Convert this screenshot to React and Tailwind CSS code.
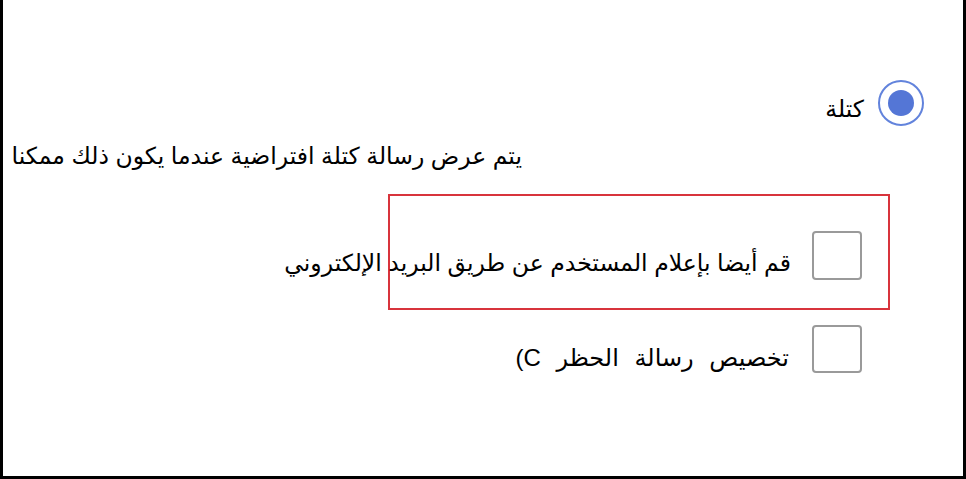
import React from "react";

export default function App() {
  const font = { fontFamily: '"Liberation Sans", "DejaVu Sans", sans-serif' };
  return (
    <div
      dir="rtl"
      style={font}
      className="w-[966px] h-[479px] bg-white border-l-[3px] border-r-[3px] border-b-[3px] border-black overflow-hidden text-black"
    >
      <div className="flex flex-col items-start pt-[80px] pr-[39px]">
        {/* Radio row */}
        <div className="flex items-center gap-[14px] h-[46px]">
          <div className="w-[46px] h-[46px] rounded-full border-[2px] border-[#6283dc] flex items-center justify-center shrink-0">
            <div className="w-[26px] h-[26px] rounded-full bg-[#5476d6]" />
          </div>
          <span className="text-[23.5px] leading-[30px] mt-[12px]">كتلة</span>
        </div>

        {/* Description */}
        <div className="mr-[402px] mt-[15px] h-[30px] text-[23.5px] leading-[30px] whitespace-nowrap">
          يتم عرض رسالة كتلة افتراضية عندما يكون ذلك ممكنا
        </div>

        {/* Red highlighted row */}
        <div className="mr-[34px] mt-[23px] w-[502px] h-[116px] border-[2px] border-[#d8343c] pr-[26px] pt-[35px]">
          <div className="flex items-start gap-[21px]">
            <div className="w-[50px] h-[49px] border-[2px] border-[#9a9a9a] rounded-[4px] shrink-0" />
            <span className="text-[23.5px] leading-[30px] mt-[17px] whitespace-nowrap">
              قم أيضا بإعلام المستخدم عن طريق البريد الإلكتروني
            </span>
          </div>
        </div>

        {/* Second checkbox row */}
        <div className="mr-[62px] mt-[15px] flex items-start gap-[23px]">
          <div className="w-[50px] h-[48px] border-[2px] border-[#9a9a9a] rounded-[4px] shrink-0" />
          <span className="text-[24px] leading-[30px] mt-[18px] whitespace-nowrap [word-spacing:9px]">
            تخصيص رسالة الحظر C)
          </span>
        </div>
      </div>
    </div>
  );
}
